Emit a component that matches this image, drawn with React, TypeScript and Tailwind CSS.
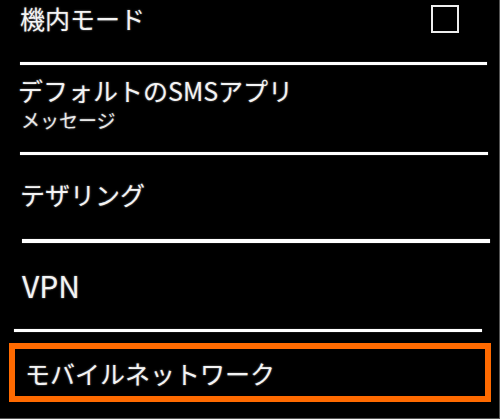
import React from 'react';

const glow = '[text-shadow:0_0_2px_rgba(255,255,255,0.55)]';

function Divider({ className }: { className: string }) {
  return <div className={`h-[3px] bg-white shadow-[0_0_1px_rgba(255,255,255,0.6)] ${className}`} />;
}

export default function App() {
  return (
    <div
      className="w-[500px] h-[419px] bg-black text-[#f4f4f4] overflow-hidden flex flex-col border-b border-r border-[#555]"
      style={{ fontFamily: '"Noto Sans CJK JP", "Noto Sans", sans-serif' }}
    >
      {/* 機内モード */}
      <div className="h-[62px] flex items-start justify-between pl-[20px] pr-[40px]">
        <span className={`text-[25px] leading-none mt-[6px] ${glow}`}>機内モード</span>
        <div className="w-[28px] h-[28px] mt-[5px] border-2 border-[#eeeeee]" />
      </div>
      <Divider className="ml-[20px] w-[467px]" />

      {/* SMS */}
      <div className="h-[87px] flex flex-col pl-[18px]">
        <span className={`text-[25px] leading-none mt-[13px] ${glow}`}>デフォルトのSMSアプリ</span>
        <span className={`text-[19px] leading-none mt-[7px] pl-[3px] text-[#e8e8e8] ${glow}`}>メッセージ</span>
      </div>
      <Divider className="ml-[20px] w-[468px]" />

      {/* テザリング */}
      <div className="h-[84px] flex items-center pl-[20px]">
        <span className={`text-[25px] leading-none mt-[-5px] ${glow}`}>テザリング</span>
      </div>
      <Divider className="ml-[22px] w-[468px] h-[4px]" />

      {/* VPN */}
      <div className="h-[86px] flex items-center pl-[22px]">
        <span className={`text-[30px] leading-none mt-[-2px] ${glow}`}>VPN</span>
      </div>
      <Divider className="ml-[14px] w-[468px]" />

      {/* モバイルネットワーク */}
      <div className="mt-[11px] ml-[9px] w-[482px] h-[59px] border-[6px] border-[#ff6a00] flex items-center pl-[10px]">
        <span className={`text-[25px] leading-none mt-[1px] ${glow}`}>モバイルネットワーク</span>
      </div>
    </div>
  );
}
